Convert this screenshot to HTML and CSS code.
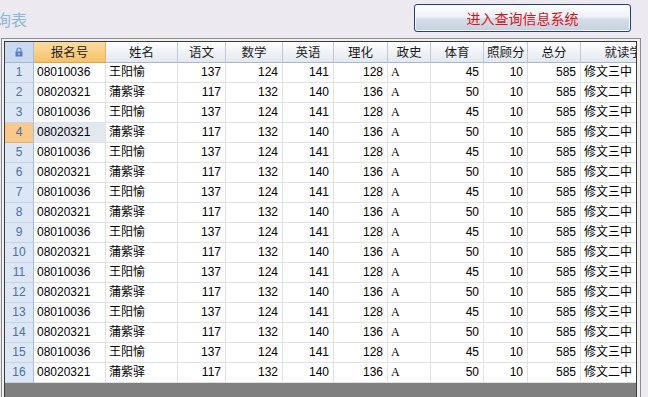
FILE: index.html
```html
<!DOCTYPE html>
<html lang="zh-CN">
<head>
  <meta charset="UTF-8" />
  <title>成绩查询表</title>
  <link rel="stylesheet" href="styles.css">
</head>
<body>
  <div class="top">
    <div class="title">成绩查询表</div>
    <button class="enter-btn">进入查询信息系统</button>
  </div>

  <div class="frame">
    <div class="grid">
      <div class="row head">
        <div class="rn lock">
          <svg width="8" height="10" viewBox="0 0 8 10"><path d="M2 4.5V3a2 2 0 0 1 4 0v1.5" fill="none" stroke="#5a7cc0" stroke-width="1.2"/><rect x="0.5" y="4.5" width="7" height="5" fill="#5a7cc0"/><rect x="3.5" y="6" width="1" height="2" fill="#dbe6f6"/></svg>
        </div>
        <div class="c sel">报名号</div>
        <div class="c">姓名</div>
        <div class="c">语文</div>
        <div class="c">数学</div>
        <div class="c">英语</div>
        <div class="c">理化</div>
        <div class="c">政史</div>
        <div class="c">体育</div>
        <div class="c">照顾分</div>
        <div class="c">总分</div>
        <div class="c">就读学校</div>
      </div>

      <div class="row"><div class="rn">1</div><div class="c">08010036</div><div class="c">王阳愉</div><div class="c num">137</div><div class="c num">124</div><div class="c num">141</div><div class="c num">128</div><div class="c grade">A</div><div class="c num">45</div><div class="c num">10</div><div class="c num">585</div><div class="c">修文三中</div></div>
      <div class="row"><div class="rn">2</div><div class="c">08020321</div><div class="c">蒲紫驿</div><div class="c num">117</div><div class="c num">132</div><div class="c num">140</div><div class="c num">136</div><div class="c grade">A</div><div class="c num">50</div><div class="c num">10</div><div class="c num">585</div><div class="c">修文二中</div></div>
      <div class="row"><div class="rn">3</div><div class="c">08010036</div><div class="c">王阳愉</div><div class="c num">137</div><div class="c num">124</div><div class="c num">141</div><div class="c num">128</div><div class="c grade">A</div><div class="c num">45</div><div class="c num">10</div><div class="c num">585</div><div class="c">修文三中</div></div>
      <div class="row current"><div class="rn">4</div><div class="c active">08020321</div><div class="c">蒲紫驿</div><div class="c num">117</div><div class="c num">132</div><div class="c num">140</div><div class="c num">136</div><div class="c grade">A</div><div class="c num">50</div><div class="c num">10</div><div class="c num">585</div><div class="c">修文二中</div></div>
      <div class="row"><div class="rn">5</div><div class="c">08010036</div><div class="c">王阳愉</div><div class="c num">137</div><div class="c num">124</div><div class="c num">141</div><div class="c num">128</div><div class="c grade">A</div><div class="c num">45</div><div class="c num">10</div><div class="c num">585</div><div class="c">修文三中</div></div>
      <div class="row"><div class="rn">6</div><div class="c">08020321</div><div class="c">蒲紫驿</div><div class="c num">117</div><div class="c num">132</div><div class="c num">140</div><div class="c num">136</div><div class="c grade">A</div><div class="c num">50</div><div class="c num">10</div><div class="c num">585</div><div class="c">修文二中</div></div>
      <div class="row"><div class="rn">7</div><div class="c">08010036</div><div class="c">王阳愉</div><div class="c num">137</div><div class="c num">124</div><div class="c num">141</div><div class="c num">128</div><div class="c grade">A</div><div class="c num">45</div><div class="c num">10</div><div class="c num">585</div><div class="c">修文三中</div></div>
      <div class="row"><div class="rn">8</div><div class="c">08020321</div><div class="c">蒲紫驿</div><div class="c num">117</div><div class="c num">132</div><div class="c num">140</div><div class="c num">136</div><div class="c grade">A</div><div class="c num">50</div><div class="c num">10</div><div class="c num">585</div><div class="c">修文二中</div></div>
      <div class="row"><div class="rn">9</div><div class="c">08010036</div><div class="c">王阳愉</div><div class="c num">137</div><div class="c num">124</div><div class="c num">141</div><div class="c num">128</div><div class="c grade">A</div><div class="c num">45</div><div class="c num">10</div><div class="c num">585</div><div class="c">修文三中</div></div>
      <div class="row"><div class="rn">10</div><div class="c">08020321</div><div class="c">蒲紫驿</div><div class="c num">117</div><div class="c num">132</div><div class="c num">140</div><div class="c num">136</div><div class="c grade">A</div><div class="c num">50</div><div class="c num">10</div><div class="c num">585</div><div class="c">修文二中</div></div>
      <div class="row"><div class="rn">11</div><div class="c">08010036</div><div class="c">王阳愉</div><div class="c num">137</div><div class="c num">124</div><div class="c num">141</div><div class="c num">128</div><div class="c grade">A</div><div class="c num">45</div><div class="c num">10</div><div class="c num">585</div><div class="c">修文三中</div></div>
      <div class="row"><div class="rn">12</div><div class="c">08020321</div><div class="c">蒲紫驿</div><div class="c num">117</div><div class="c num">132</div><div class="c num">140</div><div class="c num">136</div><div class="c grade">A</div><div class="c num">50</div><div class="c num">10</div><div class="c num">585</div><div class="c">修文二中</div></div>
      <div class="row"><div class="rn">13</div><div class="c">08010036</div><div class="c">王阳愉</div><div class="c num">137</div><div class="c num">124</div><div class="c num">141</div><div class="c num">128</div><div class="c grade">A</div><div class="c num">45</div><div class="c num">10</div><div class="c num">585</div><div class="c">修文三中</div></div>
      <div class="row"><div class="rn">14</div><div class="c">08020321</div><div class="c">蒲紫驿</div><div class="c num">117</div><div class="c num">132</div><div class="c num">140</div><div class="c num">136</div><div class="c grade">A</div><div class="c num">50</div><div class="c num">10</div><div class="c num">585</div><div class="c">修文二中</div></div>
      <div class="row"><div class="rn">15</div><div class="c">08010036</div><div class="c">王阳愉</div><div class="c num">137</div><div class="c num">124</div><div class="c num">141</div><div class="c num">128</div><div class="c grade">A</div><div class="c num">45</div><div class="c num">10</div><div class="c num">585</div><div class="c">修文三中</div></div>
      <div class="row"><div class="rn">16</div><div class="c">08020321</div><div class="c">蒲紫驿</div><div class="c num">117</div><div class="c num">132</div><div class="c num">140</div><div class="c num">136</div><div class="c grade">A</div><div class="c num">50</div><div class="c num">10</div><div class="c num">585</div><div class="c">修文二中</div></div>
    </div>
  </div>
</body>
</html>
```

FILE: styles.css
```css
html, body {
  margin: 0;
  padding: 0;
  height: 100%;
  overflow: hidden;
}
body {
  background: #eceaf0;
  font-family: "Liberation Sans", "Noto Sans CJK SC", sans-serif;
  font-size: 12px;
  color: #000;
}
.top {
  height: 38px;
  display: flex;
  justify-content: space-between;
  align-items: flex-start;
  overflow: hidden;
}
.title {
  margin-left: -53px;
  margin-top: 7px;
  font-family: "Noto Sans CJK SC", sans-serif;
  font-size: 16px;
  color: #8db5dd;
  white-space: nowrap;
}
.enter-btn {
  margin-top: 4px;
  margin-right: 17px;
  width: 217px;
  height: 28px;
  border: 1px solid #243f7a;
  border-radius: 3px;
  background: linear-gradient(#ffffff 0%, #eef2f8 45%, #d6dde9 55%, #c6d0df 100%);
  box-shadow: inset 0 0 0 1px #f6f8fc;
  color: #d8141a;
  font-family: "Noto Sans CJK SC", sans-serif;
  font-size: 14px;
  padding: 0;
}
.frame {
  box-sizing: border-box;
  margin-left: 1px;
  width: 640px;
  height: calc(100% - 38px);
  border: 1px solid #8c8c8c;
  border-bottom: 0;
  padding: 2px 3px 0 2px;
  background: #f0f0f0;
}
.grid {
  box-sizing: border-box;
  height: 100%;
  border: 1px solid #3a3a3a;
  border-bottom: 0;
  background: #808080;
  overflow: hidden;
}
.row {
  display: grid;
  grid-template-columns: 29px 72px 72px 48px 57px 51px 54px 43px 53px 44px 53px 98px;
  width: 674px;
  height: 20px;
  background: #fff;
}
.c, .rn {
  box-sizing: border-box;
  border-right: 1px solid #e2e2e2;
  border-bottom: 1px solid #e2e2e2;
  padding: 0 3px;
  line-height: 19px;
  white-space: nowrap;
  overflow: hidden;
}
.num {
  text-align: right;
  padding-right: 4px;
}
.grade {
  font-family: "Liberation Serif", serif;
}
.rn {
  background: #dce6f4;
  color: #4f6f9c;
  text-align: center;
  border-right-color: #a9bdd8;
  border-bottom-color: #c5d3e8;
}
.head {
  height: 21px;
}
.head .c {
  background: linear-gradient(#fdfdfe, #e3e8f0);
  border-right: 1px solid #bcc8d8;
  border-bottom: 1px solid #a9b7cb;
  text-align: center;
  font-family: "Noto Sans CJK SC", sans-serif;
  font-size: 12.5px;
  line-height: 20px;
  color: #1c1c1c;
}
.head .c.sel {
  background: linear-gradient(#fbdca0, #f5c26c);
  border-bottom-color: #e8a040;
  border-right-color: #e4b070;
}
.head .lock {
  background: #c8d9f0;
  border-bottom-color: #a9b7cb;
  display: flex;
  align-items: center;
  justify-content: center;
}
.current .rn {
  background: #f8c98a;
  color: #4f6f9c;
  border-bottom-color: #e6b070;
}
.c.active {
  background: #e4e8f0;
}
```
